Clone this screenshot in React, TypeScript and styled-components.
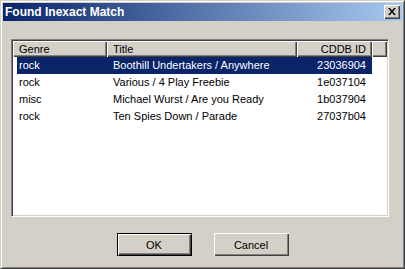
import React from "react";
import styled, { createGlobalStyle } from "styled-components";

const GlobalStyle = createGlobalStyle`
  html, body { margin: 0; padding: 0; background: #d4d0c8; }
  body { font-family: "Liberation Sans", Arial, sans-serif; font-size: 11px; }
`;

const Window = styled.div`
  width: 405px;
  height: 269px;
  box-sizing: border-box;
  background: #d4d0c8;
  border: 1px solid;
  border-color: #d4d0c8 #404040 #404040 #d4d0c8;
  box-shadow: inset 1px 1px #ffffff, inset -1px -1px #808080;
  padding: 2px;
  display: flex;
  flex-direction: column;
`;

const TitleBar = styled.div`
  height: 18px;
  flex: none;
  display: flex;
  align-items: center;
  justify-content: space-between;
  padding: 0 2px 0 2px;
  background: linear-gradient(to right, #0a246a, #a6caf0);
`;

const TitleText = styled.span`
  color: #ffffff;
  font-weight: bold;
  font-size: 12px;
  line-height: 18px;
`;

const CloseButton = styled.div`
  width: 16px;
  height: 14px;
  box-sizing: border-box;
  background: #d4d0c8;
  box-shadow: inset 1px 1px #ffffff, inset -1px -1px #404040, inset -2px -2px #808080;
  display: flex;
  align-items: center;
  justify-content: center;
  padding: 0 1px 1px 0;
`;

const Body = styled.div`
  flex: 1;
  display: flex;
  flex-direction: column;
  padding: 18px 13px 0 8px;
`;

const ListView = styled.div`
  height: 178px;
  box-sizing: border-box;
  background: #ffffff;
  border: 1px solid;
  border-color: #808080 #ffffff #ffffff #808080;
  box-shadow: inset 1px 1px #404040, inset -1px -1px #d4d0c8;
  padding: 1px;
  display: flex;
  flex-direction: column;
`;

const Header = styled.div`
  display: flex;
  height: 16px;
  flex: none;
`;

const HeaderCell = styled.div<{ $w?: number; $right?: boolean }>`
  ${(p) => (p.$w ? `width: ${p.$w}px; flex: none;` : "flex: 1;")}
  box-sizing: border-box;
  background: #d4d0c8;
  box-shadow: inset 1px 1px #ffffff, inset -1px -1px #404040, inset -2px -2px #808080;
  padding: 0 6px;
  line-height: 16px;
  text-align: ${(p) => (p.$right ? "right" : "left")};
  color: #000;
  white-space: nowrap;
`;

const Row = styled.div<{ $selected?: boolean }>`
  display: flex;
  height: 17px;
  margin-left: 4px;
  width: 355px;
  background: ${(p) => (p.$selected ? "#0a246a" : "transparent")};
  color: ${(p) => (p.$selected ? "#ffffff" : "#000000")};
`;

const Cell = styled.div<{ $w: number; $right?: boolean; $pl?: number }>`
  width: ${(p) => p.$w}px;
  flex: none;
  box-sizing: border-box;
  line-height: 17px;
  padding-left: ${(p) => p.$pl ?? 6}px;
  padding-right: ${(p) => (p.$right ? 6 : 0)}px;
  text-align: ${(p) => (p.$right ? "right" : "left")};
  white-space: nowrap;
  overflow: hidden;
`;

const ButtonRow = styled.div`
  display: flex;
  justify-content: center;
  gap: 22px;
  margin-top: 16px;
  padding-left: 5px;
`;

const Button = styled.div<{ $default?: boolean }>`
  width: 75px;
  height: 23px;
  box-sizing: border-box;
  background: #d4d0c8;
  display: flex;
  align-items: center;
  justify-content: center;
  color: #000;
  ${(p) =>
    p.$default
      ? `border: 1px solid #000000; box-shadow: inset 1px 1px #ffffff, inset -1px -1px #404040, inset -2px -2px #808080;`
      : `box-shadow: inset 1px 1px #ffffff, inset -1px -1px #404040, inset -2px -2px #808080;`}
`;

const rows = [
  { genre: "rock", title: "Boothill Undertakers / Anywhere", id: "23036904" },
  { genre: "rock", title: "Various / 4 Play Freebie", id: "1e037104" },
  { genre: "misc", title: "Michael Wurst / Are you Ready", id: "1b037904" },
  { genre: "rock", title: "Ten Spies Down / Parade", id: "27037b04" },
];

export default function App() {
  return (
    <>
      <GlobalStyle />
      <Window>
        <TitleBar>
          <TitleText>Found Inexact Match</TitleText>
          <CloseButton>
            <svg width="8" height="7" viewBox="0 0 8 7">
              <path d="M0 0h2l2 2.5L6 0h2L5 3.5 8 7H6L4 4.5 2 7H0l3-3.5z" fill="#000" />
            </svg>
          </CloseButton>
        </TitleBar>
        <Body>
          <ListView>
            <Header>
              <HeaderCell $w={94}>Genre</HeaderCell>
              <HeaderCell $w={190}>Title</HeaderCell>
              <HeaderCell $w={75} $right>CDDB ID</HeaderCell>
              <HeaderCell />
            </Header>
            {rows.map((r, i) => (
              <Row key={i} $selected={i === 0}>
                <Cell $w={90} $pl={2}>{r.genre}</Cell>
                <Cell $w={190}>{r.title}</Cell>
                <Cell $w={75} $right>{r.id}</Cell>
              </Row>
            ))}
          </ListView>
          <ButtonRow>
            <Button $default>OK</Button>
            <Button>Cancel</Button>
          </ButtonRow>
        </Body>
      </Window>
    </>
  );
}
